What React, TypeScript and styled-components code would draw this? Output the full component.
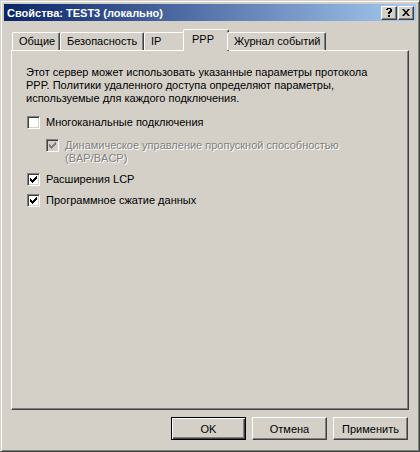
import React, { FC } from 'react'
import styled, { createGlobalStyle, css } from 'styled-components'

const GlobalStyle = createGlobalStyle`
  html, body {
    margin: 0;
    padding: 0;
    background: #d4d0c8;
  }
  body {
    font-family: Tahoma, "Liberation Sans", Arial, sans-serif;
    font-size: 11px;
    color: #000;
  }
`

const raised = css`
  border-style: solid;
  border-width: 1px;
  border-color: #fff #404040 #404040 #fff;
  box-shadow: inset -1px -1px 0 #808080, inset 1px 1px 0 #d4d0c8;
`

const Window = styled.div`
  box-sizing: border-box;
  width: 420px;
  height: 452px;
  background: #d4d0c8;
  border: 1px solid;
  border-color: #d4d0c8 #404040 #404040 #d4d0c8;
  box-shadow: inset 1px 1px 0 #fff, inset -1px -1px 0 #808080;
  padding: 3px;
  display: flex;
  flex-direction: column;
`

const TitleBar = styled.div`
  height: 18px;
  display: flex;
  align-items: center;
  padding: 0 2px 0 3px;
  background: linear-gradient(to right, #0a246a, #a6caf0);
  color: #fff;
  font-weight: bold;
  font-size: 11px;
`

const TitleText = styled.div`
  flex: 1;
  white-space: nowrap;
`

const TitleButtons = styled.div`
  display: flex;
  gap: 1px;
`

const CaptionButton = styled.div`
  box-sizing: border-box;
  ${raised};
  width: 16px;
  height: 14px;
  background: #d4d0c8;
  color: #000;
  display: flex;
  align-items: center;
  justify-content: center;
`

const Body = styled.div`
  flex: 1;
  display: flex;
  flex-direction: column;
  padding: 8px 7px 8px 7px;
`

const TabStrip = styled.div`
  display: flex;
  align-items: flex-end;
  height: 21px;
  padding-left: 1px;
  position: relative;
  z-index: 1;
`

const Tab = styled.div<{ $width: number; $active?: boolean }>`
  box-sizing: border-box;
  width: ${p => p.$width}px;
  height: 18px;
  padding: 2px 0 0 6px;
  border-style: solid;
  border-width: 1px 1px 0 1px;
  border-color: #fff #404040 transparent #fff;
  border-radius: 2px 2px 0 0;
  box-shadow: inset -1px 0 0 #808080;
  background: #d4d0c8;
  white-space: nowrap;
  ${p => p.$active && css`
    width: ${p.$width + 4}px;
    margin: 0 -2px -1px -2px;
    padding: 3px 0 0 8px;
    height: 22px;
  `}
`

const Panel = styled.div`
  box-sizing: border-box;
  height: 360px;
  border: 1px solid;
  border-color: #fff #404040 #404040 #fff;
  box-shadow: inset -1px -1px 0 #808080;
  padding: 15px 14px;
  display: flex;
  flex-direction: column;
`

const Description = styled.p`
  margin: 0 0 11px 0;
  line-height: 13px;
`

const CheckRow = styled.label<{ $indent?: boolean; $disabled?: boolean; $gap?: number }>`
  display: flex;
  align-items: flex-start;
  gap: 6px;
  margin-left: ${p => (p.$indent ? 20 : 1)}px;
  line-height: 13px;
  margin-bottom: ${p => p.$gap ?? 8}px;
  color: ${p => (p.$disabled ? '#808080' : '#000')};
  text-shadow: ${p => (p.$disabled ? '1px 1px 0 #fff' : 'none')};
`

const Box = styled.span<{ $disabled?: boolean }>`
  box-sizing: border-box;
  flex: none;
  width: 13px;
  height: 13px;
  border: 1px solid;
  border-color: #808080 #fff #fff #808080;
  box-shadow: inset 1px 1px 0 #404040, inset -1px -1px 0 #d4d0c8;
  background: ${p => (p.$disabled ? '#d4d0c8' : '#fff')};
  display: flex;
  align-items: center;
  justify-content: center;
`

const Footer = styled.div`
  display: flex;
  justify-content: flex-end;
  gap: 6px;
  margin-top: 7px;
  padding-right: 1px;
`

const Button = styled.button<{ $default?: boolean }>`
  box-sizing: border-box;
  width: 75px;
  height: 23px;
  margin: 0;
  padding: 0;
  font-family: inherit;
  font-size: 11px;
  color: #000;
  background: #d4d0c8;
  ${raised};
  ${p => p.$default && css`
    border: 1px solid #000;
    box-shadow: inset 1px 1px 0 #fff, inset -1px -1px 0 #404040, inset -2px -2px 0 #808080;
  `}
`

const Check: FC<{ color: string }> = ({ color }) => (
  <svg width="7" height="7" viewBox="0 0 7 7">
    <path d="M0 2h1v1h1v1h1v-1h1v-1h1v-1h1v-1h1v3h-1v1h-1v1h-1v1h-1v1h-1v-1h-1v-1h-1v-1h-1z" fill={color} />
  </svg>
)

const CheckBox: FC<{ checked?: boolean; disabled?: boolean }> = ({ checked, disabled }) => (
  <Box $disabled={disabled}>{checked && <Check color={disabled ? '#808080' : '#000'} />}</Box>
)

const tabs = [
  { label: 'Общие', width: 48 },
  { label: 'Безопасность', width: 84 },
  { label: 'IP', width: 41 },
  { label: 'PPP', width: 42, active: true },
  { label: 'Журнал событий', width: 99 },
]

const App: FC = () => (
  <>
    <GlobalStyle />
    <Window>
      <TitleBar>
        <TitleText>Свойства: TEST3 (локально)</TitleText>
        <TitleButtons>
          <CaptionButton>
            <svg width="8" height="9" viewBox="0 0 8 9">
              <path d="M1 1h1v-1h4v1h1v3h-1v1h-1v1h-2v-2h1v-1h1v-2h-2v1h-2zM3 7h2v2h-2z" fill="#000" />
            </svg>
          </CaptionButton>
          <CaptionButton>
            <svg width="8" height="7" viewBox="0 0 8 7">
              <path d="M0 0h2l2 2.5 2-2.5h2l-3 3.5 3 3.5h-2l-2-2.5-2 2.5h-2l3-3.5z" fill="#000" />
            </svg>
          </CaptionButton>
        </TitleButtons>
      </TitleBar>
      <Body>
        <TabStrip>
          {tabs.map(t => (
            <Tab key={t.label} $width={t.width} $active={t.active}>{t.label}</Tab>
          ))}
        </TabStrip>
        <Panel>
          <Description>
            Этот сервер может использовать указанные параметры протокола
            PPP. Политики удаленного доступа определяют параметры,
            используемые для каждого подключения.
          </Description>
          <CheckRow $gap={10}>
            <CheckBox />
            <span>Многоканальные подключения</span>
          </CheckRow>
          <CheckRow $indent $disabled>
            <CheckBox checked disabled />
            <span>Динамическое управление пропускной способностью<br />(BAP/BACP)</span>
          </CheckRow>
          <CheckRow>
            <CheckBox checked />
            <span>Расширения LCP</span>
          </CheckRow>
          <CheckRow>
            <CheckBox checked />
            <span>Программное сжатие данных</span>
          </CheckRow>
        </Panel>
        <Footer>
          <Button $default>OK</Button>
          <Button>Отмена</Button>
          <Button>Применить</Button>
        </Footer>
      </Body>
    </Window>
  </>
)

export default App
